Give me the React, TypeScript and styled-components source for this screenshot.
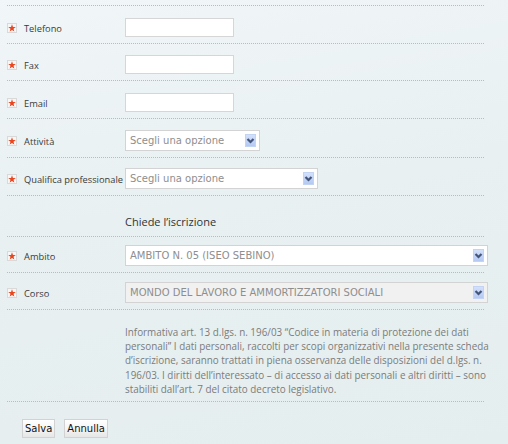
import React from "react";
import styled, { createGlobalStyle } from "styled-components";

const Global = createGlobalStyle`
  html, body { margin: 0; padding: 0; }
  body {
    font-family: "Open Sans", "Liberation Sans", sans-serif;
    background: #e9f1f2;
  }
`;

const Page = styled.div`
  width: 508px;
  height: 444px;
  overflow: hidden;
  background: linear-gradient(170deg, #f1f6f8 0%, #e8f0f1 45%, #e5eeef 100%);
`;

const Form = styled.div`
  width: 477px;
  padding-left: 7px;
`;

const TopRule = styled.div`
  height: 5px;
  border-bottom: 1px dotted #b9bcbe;
`;

const Row = styled.div<{ $h: number }>`
  box-sizing: border-box;
  height: ${(p) => p.$h}px;
  border-bottom: 1px dotted #b9bcbe;
  padding-bottom: 6px;
  display: flex;
  align-items: flex-end;
`;

const Line = styled.div`
  display: flex;
  align-items: center;
`;

const StarBox = styled.span`
  box-sizing: border-box;
  width: 10px;
  height: 10px;
  margin-right: 7px;
  border: 1px solid #d9d9d9;
  background: #f6f6f6;
  display: flex;
  align-items: center;
  justify-content: center;
`;

const Label = styled.label`
  width: 101px;
  padding-top: 3px;
  font-size: 9.3px;
  line-height: 14px;
  color: #3b3b3b;
  white-space: nowrap;
`;

const TextInput = styled.input`
  box-sizing: border-box;
  width: 109px;
  height: 19px;
  margin: 0;
  border: 1px solid #d6d6d6;
  background: #ffffff;
  padding: 0 3px;
  outline: none;
`;

const SelectBox = styled.div<{ $w: number; $disabled?: boolean }>`
  box-sizing: border-box;
  width: ${(p) => p.$w}px;
  height: 21px;
  border: 1px solid #d3d3d3;
  background: ${(p) => (p.$disabled ? "#f1f1f1" : "#ffffff")};
  display: flex;
  align-items: center;
  justify-content: space-between;
  padding: 0 3px 0 4px;
`;

const SelectValue = styled.span`
  font-family: "DejaVu Sans", Verdana, sans-serif;
  font-size: 10px;
  color: #8e8e8e;
  white-space: nowrap;
`;

const ArrowBtn = styled.span`
  box-sizing: border-box;
  width: 11px;
  height: 13px;
  border: 1px solid #c3d3f3;
  background: linear-gradient(180deg, #d3e0fa 0%, #b4c9f3 100%);
  display: flex;
  align-items: center;
  justify-content: center;
`;

const SectionTitle = styled.div`
  padding: 0 0 0 118px;
  font-size: 11px;
  line-height: 16px;
  color: #333;
`;

const InfoText = styled.p`
  margin: 0;
  align-self: flex-start;
  padding: 15px 0 0 118px;
  font-size: 9.9px;
  line-height: 14.2px;
  color: #7b7b7b;
  white-space: nowrap;
`;

const Buttons = styled.div`
  display: flex;
  gap: 9px;
  padding: 17px 0 0 15px;
`;

const Button = styled.button`
  box-sizing: border-box;
  height: 19px;
  margin: 0;
  padding: 0 2px;
  border: 1px solid #d2d2d2;
  background: linear-gradient(180deg, #ffffff 0%, #f4f4f4 55%, #e6e6e6 100%);
  font-family: "DejaVu Sans", Verdana, sans-serif;
  font-size: 10px;
  color: #111;
  cursor: pointer;
`;

const Star = () => (
  <StarBox>
    <svg width="8" height="8" viewBox="0 0 10 10">
      <polygon
        points="5,0.3 6.2,3.6 9.7,3.7 6.9,5.9 7.9,9.4 5,7.4 2.1,9.4 3.1,5.9 0.3,3.7 3.8,3.6"
        fill="#e8461f"
      />
    </svg>
  </StarBox>
);

const Arrow = () => (
  <ArrowBtn>
    <svg width="9" height="11" viewBox="0 0 9 11">
      <polyline
        points="1.5,4 4.5,7 7.5,4"
        fill="none"
        stroke="#44557a"
        strokeWidth="2.2"
      />
    </svg>
  </ArrowBtn>
);

const Select = ({ w, value, disabled }: { w: number; value: string; disabled?: boolean }) => (
  <SelectBox $w={w} $disabled={disabled}>
    <SelectValue>{value}</SelectValue>
    <Arrow />
  </SelectBox>
);

const Field = ({ h, label, children }: { h: number; label: string; children: React.ReactNode }) => (
  <Row $h={h}>
    <Line>
      <Star />
      <Label>{label}</Label>
      {children}
    </Line>
  </Row>
);

export default function App() {
  return (
    <>
      <Global />
      <Page>
        <Form>
          <TopRule />
          <Field h={38} label="Telefono">
            <TextInput />
          </Field>
          <Field h={37} label="Fax">
            <TextInput />
          </Field>
          <Field h={38} label="Email">
            <TextInput />
          </Field>
          <Field h={39} label="Attività">
            <Select w={135} value="Scegli una opzione" />
          </Field>
          <Field h={38} label="Qualifica professionale">
            <Select w={193} value="Scegli una opzione" />
          </Field>
          <Row $h={41}>
            <SectionTitle>Chiede l’iscrizione</SectionTitle>
          </Row>
          <Field h={36} label="Ambito">
            <Select w={363} value="AMBITO N. 05 (ISEO SEBINO)" />
          </Field>
          <Field h={37} label="Corso">
            <Select w={363} value="MONDO DEL LAVORO E AMMORTIZZATORI SOCIALI" disabled />
          </Field>
          <Row $h={92}>
            <InfoText>
              Informativa art. 13 d.lgs. n. 196/03 “Codice in materia di protezione dei dati
              <br />
              personali” I dati personali, raccolti per scopi organizzativi nella presente scheda
              <br />
              d’iscrizione, saranno trattati in piena osservanza delle disposizioni del d.lgs. n.
              <br />
              196/03. I diritti dell’interessato – di accesso ai dati personali e altri diritti – sono
              <br />
              stabiliti dall’art. 7 del citato decreto legislativo.
            </InfoText>
          </Row>
          <Buttons>
            <Button type="button">Salva</Button>
            <Button type="button">Annulla</Button>
          </Buttons>
        </Form>
      </Page>
    </>
  );
}
